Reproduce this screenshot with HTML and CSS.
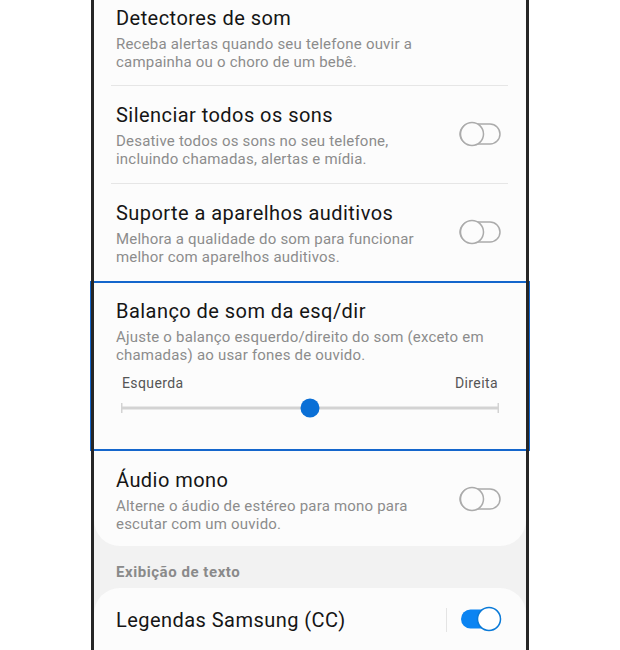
FILE: index.html
```html
<!DOCTYPE html>
<html lang="pt-BR">
<head>
    <meta charset="UTF-8">
    <title>Acessibilidade - Melhorias de audição</title>
    <meta name="viewport" content="width=device-width, initial-scale=1.0">
    <link rel="stylesheet" href="styles.css">
</head>
<body>
    <div class="phone">
        <div class="card card-top">
            <div class="row row-first">
                <div class="row-text">
                    <div class="title">Detectores de som</div>
                    <div class="desc">Receba alertas quando seu telefone ouvir a campainha ou o choro de um bebê.</div>
                </div>
            </div>
            <div class="divider"></div>

            <div class="row">
                <div class="row-text">
                    <div class="title">Silenciar todos os sons</div>
                    <div class="desc">Desative todos os sons no seu telefone, incluindo chamadas, alertas e mídia.</div>
                </div>
                <svg class="switch" width="42" height="26" viewBox="0 0 42 26">
                    <rect x="1" y="3" width="40" height="20" rx="10" fill="none" stroke="#ababab" stroke-width="1.5"/>
                    <circle cx="13" cy="13" r="11.5" fill="#fcfcfc" stroke="#ababab" stroke-width="1.5"/>
                </svg>
            </div>
            <div class="divider"></div>

            <div class="row">
                <div class="row-text">
                    <div class="title">Suporte a aparelhos auditivos</div>
                    <div class="desc">Melhora a qualidade do som para funcionar melhor com aparelhos auditivos.</div>
                </div>
                <svg class="switch" width="42" height="26" viewBox="0 0 42 26">
                    <rect x="1" y="3" width="40" height="20" rx="10" fill="none" stroke="#ababab" stroke-width="1.5"/>
                    <circle cx="13" cy="13" r="11.5" fill="#fcfcfc" stroke="#ababab" stroke-width="1.5"/>
                </svg>
            </div>
            <div class="divider"></div>

            <div class="row balance">
                <div class="row-text">
                    <div class="title">Balanço de som da esq/dir</div>
                    <div class="desc">Ajuste o balanço esquerdo/direito do som (exceto em chamadas) ao usar fones de ouvido.</div>
                    <div class="slider">
                        <div class="slider-labels">
                            <span>Esquerda</span>
                            <span>Direita</span>
                        </div>
                        <svg class="slider-track" width="378" height="20" viewBox="0 0 378 20">
                            <line x1="0" y1="10" x2="378" y2="10" stroke="#d3d3d3" stroke-width="3"/>
                            <line x1="0.75" y1="5" x2="0.75" y2="15" stroke="#d3d3d3" stroke-width="1.5"/>
                            <line x1="377.25" y1="5" x2="377.25" y2="15" stroke="#d3d3d3" stroke-width="1.5"/>
                            <circle cx="189" cy="10" r="9.5" fill="#0a6fd6"/>
                        </svg>
                    </div>
                </div>
            </div>

            <div class="row row-last">
                <div class="row-text">
                    <div class="title">Áudio mono</div>
                    <div class="desc">Alterne o áudio de estéreo para mono para escutar com um ouvido.</div>
                </div>
                <svg class="switch" width="42" height="26" viewBox="0 0 42 26">
                    <rect x="1" y="3" width="40" height="20" rx="10" fill="none" stroke="#ababab" stroke-width="1.5"/>
                    <circle cx="13" cy="13" r="11.5" fill="#fcfcfc" stroke="#ababab" stroke-width="1.5"/>
                </svg>
            </div>
        </div>

        <div class="section-label">Exibição de texto</div>

        <div class="card card-bottom">
            <div class="row row-single">
                <div class="row-text">
                    <div class="title">Legendas Samsung (CC)</div>
                </div>
                <span class="vline"></span>
                <svg class="switch" width="42" height="26" viewBox="0 0 42 26">
                    <rect x="1" y="3.5" width="40" height="19" rx="9.5" fill="#0b84f2"/>
                    <circle cx="29" cy="13" r="11.5" fill="#ffffff" stroke="#0a7ad8" stroke-width="1.5"/>
                </svg>
            </div>
            <div class="divider"></div>
        </div>
    </div>
</body>
</html>
```

FILE: styles.css
```css
html, body { margin: 0; padding: 0; background: #ffffff; overflow: hidden; }
body { font-family: Roboto, "Noto Sans", Arial, sans-serif; }

.phone { position: relative; width: 432px; margin-left: 91px; padding: 0 3px; background: #f2f2f2; min-height: 720px; }
.phone::before { content: ""; position: absolute; top: 0; bottom: 0; left: 0; right: 0; border-left: 3px solid #262626; border-right: 3px solid #262626; z-index: 3; pointer-events: none; }

.card { background: #fcfcfc; }
.card-top { margin-top: -12px; border-radius: 0 0 26px 26px; }
.card-bottom { border-radius: 26px 26px 0 0; }

.row { display: flex; align-items: center; padding: 17px 25px 15px 22px; }
.row-first { padding-top: 18px; padding-bottom: 14px; }
.row-last { padding-top: 19px; padding-bottom: 13px; }
.row-single { padding: 18px 24px 16px 22px; }
.row-text { flex: 1; }
.title { font-size: 20px; line-height: 24px; color: #151515; letter-spacing: 0.45px; }
.desc { font-size: 15px; line-height: 18px; color: #8c8c8c; margin-top: 5px; padding-right: 20px; letter-spacing: 0.2px; }
.switch { display: block; flex: none; margin-left: 12px; margin-bottom: 4px; }
.row-single .switch { margin-bottom: 2px; }

.divider { height: 1px; background: #e6e6e6; margin: 0 18px 0 17px; }

.balance { position: relative; padding-bottom: 31px; }
.balance::after { content: ""; position: absolute; top: -1px; left: -4px; right: -4px; height: 170px; border: 2px solid #1466cc; box-sizing: border-box; z-index: 2; }
.balance .desc { padding-right: 0; }
.slider { margin: 10px 2px 0 5px; }
.slider-labels { display: flex; justify-content: space-between; font-size: 14px; line-height: 18px; color: #555555; padding: 0 1px; letter-spacing: 0.4px; }
.slider-track { display: block; margin-top: 6px; }

.section-label { padding: 17px 22px 7px; font-size: 15px; line-height: 18px; font-weight: bold; color: #8a8a8a; letter-spacing: 0.55px; }

.vline { width: 1px; height: 24px; background: #e4e4e4; margin-right: 1px; }
```
